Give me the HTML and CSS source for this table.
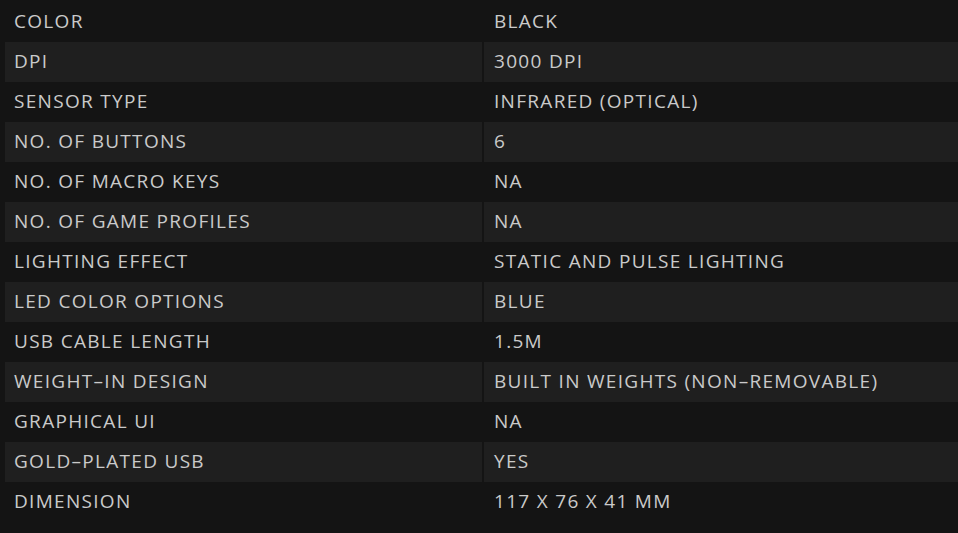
FILE: index.html
```html
<!DOCTYPE html>
<html lang="en">
    <head>
        <meta charset="utf-8" />
        <meta name="viewport" content="width=device-width, initial-scale=1" />
        <title>Specifications</title>
        <link rel="stylesheet" href="styles.css">
    </head>
    <body>
        <table class="specs">
            <tr><td>Color</td><td>Black</td></tr>
            <tr><td>DPI</td><td>3000 DPI</td></tr>
            <tr><td>Sensor Type</td><td>Infrared (Optical)</td></tr>
            <tr><td>No. of Buttons</td><td>6</td></tr>
            <tr><td>No. of Macro Keys</td><td>NA</td></tr>
            <tr><td>No. of Game Profiles</td><td>NA</td></tr>
            <tr><td>Lighting Effect</td><td>Static and Pulse Lighting</td></tr>
            <tr><td>LED Color Options</td><td>Blue</td></tr>
            <tr><td>USB Cable Length</td><td>1.5M</td></tr>
            <tr><td>Weight&#8211;in Design</td><td>Built in Weights (Non&#8211;Removable)</td></tr>
            <tr><td>Graphical UI</td><td>NA</td></tr>
            <tr><td>Gold&#8211;Plated USB</td><td>Yes</td></tr>
            <tr><td>Dimension</td><td>117 X 76 X 41 mm</td></tr>
        </table>
    </body>
</html>
```

FILE: styles.css
```css
* { margin: 0; padding: 0; }
body {
    background: #141414;
    color: #cacaca;
    font-family: "Open Sans", sans-serif;
    padding-top: 2px;
    overflow: hidden;}
.specs {
    width: 957px;
    margin-left: 3px;
    border-collapse: separate;
    border-spacing: 2px 0;
    text-transform: uppercase;
    font-size: 19px;
    letter-spacing: 1.3px;}
.specs td {
    line-height: 38px;
    padding: 0 0 2px 9px;
    vertical-align: middle;
    white-space: nowrap;}
.specs td:nth-child(1) { width: 468px; }
.specs td:nth-child(2) { padding-left: 10px; }
.specs tr:nth-child(even) td { background: #1f1f1f; }
```
